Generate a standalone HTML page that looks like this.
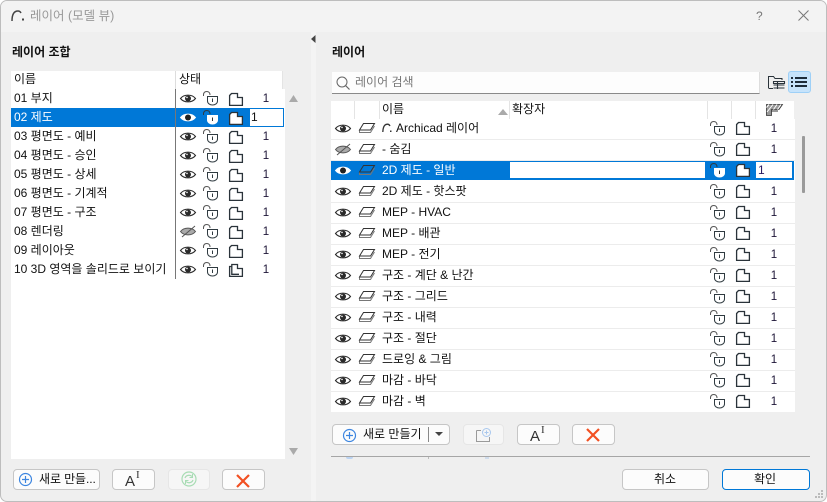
<!DOCTYPE html>
<html lang="ko"><head><meta charset="utf-8"><title>레이어 (모델 뷰)</title>
<style>
html,body{margin:0;padding:0;width:827px;height:502px;overflow:hidden;background:#fff}
*{box-sizing:border-box}
#w{position:absolute;left:0;top:0;width:827px;height:502px;background:#efefef;border:1px solid #bdbdbd;border-radius:7px;overflow:hidden;font:12px/14px "Liberation Sans","Noto Sans CJK KR",sans-serif;color:#111}
#w>*{position:absolute;margin-left:-1px}
.t{white-space:nowrap;height:14px;line-height:14px;margin-top:1px}
.r{margin-top:0}
.n{font-size:11.5px;color:#1c1436;width:12px;text-align:center;height:14px;line-height:14px;margin-top:1px}
.s{color:#fff}
svg{overflow:visible}
.b{background:#fcfcfc;border:1px solid #c6c6c6;border-radius:4px;height:21px}
.d{background:#f6f6f6;border-color:#e6e6e6}
.sep{height:1px;left:331px;width:464px;background:#ececec}
</style></head><body>
<svg width="0" height="0" style="position:absolute"><defs>
<g id="eye" fill="none" stroke="#2a2a2a"><path d="M.5 5.500C4 1 12 1 15.500 5.500C12 10 4 10 .5 5.500Z" stroke-width="1.100"/><circle cx="8" cy="5.500" r="3" fill="#2a2a2a" stroke="none"/><circle cx="7" cy="4.400" r=".8" fill="#fff" stroke="none"/></g>
<g id="eyew" fill="none" stroke="#fff"><path d="M.5 5.500C4 1 12 1 15.500 5.500C12 10 4 10 .5 5.500Z" fill="#fff"/><circle cx="8" cy="5.500" r="3" fill="#222" stroke="none"/></g>
<g id="eyex" fill="#aaa" stroke="#555"><path d="M.5 5.500C4 1 12 1 15.500 5.500C12 10 4 10 .5 5.500Z"/><path d="M2 11L15 0" fill="none"/></g>
<g id="lock" fill="none" stroke="#2f3a40"><path d="M.5 5V4C.5 1.500 2 .5 3.800 .5S7 1.700 7 4" stroke="#555"/><path d="M4.500 5.500H14.500V10C14.500 12.500 12 14 9.500 14S4.500 12.500 4.500 10Z" fill="#fff"/><path d="M9.500 7.500V11"/></g>
<g id="lockw" fill="none"><path d="M.5 5V4C.5 1.500 2 .5 3.800 .5S7 1.700 7 4" stroke="#2f3a40"/><path d="M4.500 5.500H14.500V10C14.500 12.500 12 14 9.500 14S4.500 12.500 4.500 10Z" fill="#fff" stroke="#fff"/><path d="M9.500 7.500V11" stroke="#333"/></g>
<g id="sheet" fill="#fff" stroke="#2a333a" stroke-width="1.300"><path d="M.6 3.500L2.500 1.500H8.500V5.500H13.400V13.400H.6Z"/></g>
<g id="sheet2" fill="#fff" stroke="#2a333a" stroke-width="1.300"><path d="M.6 3.500H2.800V1.500H8.500V5.500H13.400V13.400H.6ZM2.800 3.500V11.300H10"/></g>
<g id="pl" fill="none"><path d="M.5 7V9.500H11.500L15.500 3" stroke="#777"/><path d="M4.500 .5H15.500L11.500 7H.5Z" stroke="#333"/></g>
<g id="plus"><circle cx="6.500" cy="6.500" r="6" fill="none" stroke="#3d86e0" stroke-width="1.200"/><path d="M6.500 3V10M3 6.500H10" stroke="#3d86e0" stroke-width="1.200"/></g>
<g id="xx"><path d="M1 1L13 13M13 1L1 13" stroke="#f25022" stroke-width="2.200" fill="none"/></g>
</defs></svg>
<div id="w">
<div style="left:0;top:0;width:828px;height:31px;background:#f3f3f3"></div>
<svg style="left:11px;top:8px" width="14" height="12"><path d="M1 12C1 4 4 2 7 2C8.500 2 9.500 3 10 4" fill="none" stroke="#444" stroke-width="1.500"/><rect x="11" y="9.500" width="2" height="2" fill="#444"/></svg>
<div class="t" style="left:30px;top:8px;font-size:12.500px;color:#999;margin-top:0">레이어 (모델 뷰)</div>
<div class="t" style="left:756px;top:8px;font-size:12px;color:#777;margin-top:0">?</div>
<svg style="left:798px;top:9px" width="11" height="11"><path d="M.5 .5L10.500 10.500M10.500 .5L.5 10.500" stroke="#777" fill="none"/></svg>
<div style="left:311px;top:31px;width:5px;height:471px;background:#f4f4f4"></div>
<svg style="left:311px;top:34px" width="5" height="9"><path d="M4.500 0V8L0 4Z" fill="#444"/></svg>

<div class="t" style="left:12px;top:44px;font-weight:bold;margin-top:0">레이어 조합</div>
<div style="left:11px;top:88px;width:274px;height:370px;background:#fff"></div>
<div style="left:11px;top:70px;width:272px;height:18px;background:#fff"></div>
<div style="left:282px;top:70px;width:1px;height:18px;background:#e4e4e4"></div>
<div style="left:175px;top:70px;width:1px;height:18px;background:#ddd"></div>
<div class="t" style="left:14px;top:70px">이름</div>
<div class="t" style="left:179px;top:70px">상태</div>
<div style="left:11px;top:107px;width:273px;height:19px;background:#0078d7"></div>
<div style="left:175px;top:88px;width:1px;height:190px;background:#777"></div>
<div style="left:249px;top:107px;width:35px;height:19px;background:#fff;border:1px solid #0078d7"></div>
<div class="t r" style="left:14px;top:90px">01 부지</div>
<div class="t r s" style="left:14px;top:109px">02 제도</div>
<div class="t r" style="left:14px;top:128px">03 평면도 - 예비</div>
<div class="t r" style="left:14px;top:147px">04 평면도 - 승인</div>
<div class="t r" style="left:14px;top:166px">05 평면도 - 상세</div>
<div class="t r" style="left:14px;top:185px">06 평면도 - 기계적</div>
<div class="t r" style="left:14px;top:204px">07 평면도 - 구조</div>
<div class="t r" style="left:14px;top:223px">08 렌더링</div>
<div class="t r" style="left:14px;top:242px">09 레이아웃</div>
<div class="t r" style="left:14px;top:261px">10 3D 영역을 솔리드로 보이기</div>

<div class="n" style="left:260px;top:90px">1</div>
<div class="t r" style="left:251px;top:109px">1</div>
<div class="n" style="left:260px;top:128px">1</div>
<div class="n" style="left:260px;top:147px">1</div>
<div class="n" style="left:260px;top:166px">1</div>
<div class="n" style="left:260px;top:185px">1</div>
<div class="n" style="left:260px;top:204px">1</div>
<div class="n" style="left:260px;top:223px">1</div>
<div class="n" style="left:260px;top:242px">1</div>
<div class="n" style="left:260px;top:261px">1</div>

<svg style="left:289px;top:94px" width="9" height="7"><path d="M4.500 0L9 7H0Z" fill="#aaa"/></svg>
<svg style="left:289px;top:447px" width="9" height="7"><path d="M0 0H9L4.500 7Z" fill="#aaa"/></svg>

<div class="b" style="left:13px;top:468px;width:87px"></div>
<svg style="left:19px;top:472px" width="13" height="13"><use href="#plus"/></svg>
<div class="t" style="left:39px;top:470px;letter-spacing:-.1px">새로 만들...</div>
<div class="b" style="left:112px;top:468px;width:43px"></div>
<div class="t" style="left:125px;top:473px;font-size:15px;color:#333">A</div>
<div class="t" style="left:136px;top:466px;font:11px/14px 'Liberation Serif',serif;color:#333">I</div>
<div class="b d" style="left:168px;top:468px;width:42px"></div>
<svg style="left:181px;top:470px" width="16" height="16"><circle cx="8" cy="8" r="7" fill="none" stroke="#a8dcb4" stroke-width="1.200"/><path d="M4 7C5 4 9 3.500 11 5.500M12 9C11 12 7 12.500 5 10.500" fill="none" stroke="#a8dcb4" stroke-width="1.200"/><path d="M11.500 3V6.500H8.500M4.500 13V9.500H7.500" fill="none" stroke="#a8dcb4"/></svg>
<div class="b" style="left:222px;top:468px;width:43px"></div>
<svg style="left:236px;top:473px" width="14" height="14"><use href="#xx"/></svg>

<div class="t" style="left:332px;top:44px;font-weight:bold;margin-top:0">레이어</div>
<div style="left:332px;top:71px;width:428px;height:22px;background:#fdfdfd;border-bottom:1px solid #8a8a8a;border-right:1px solid #ddd"></div>
<svg style="left:336px;top:75px" width="15" height="15"><circle cx="6" cy="6" r="5" fill="none" stroke="#666"/><path d="M9.500 9.500L13.500 13.500" stroke="#666" stroke-width="1.200"/></svg>
<div class="t" style="left:355px;top:73px;color:#777">레이어 검색</div>
<svg style="left:768px;top:74px" width="17" height="15" fill="none" stroke="#2a333a"><path d="M.5 13V1.500H5.500L7 3.500H14V5"/><path d="M.5 13.500H5"/><path d="M5.500 6.500H16.500V8.500H5.500ZM5.500 10H16.500M5.500 13H16.500M9.500 6.500V14" stroke-width="1.100"/></svg>
<div style="left:788px;top:70px;width:23px;height:22px;background:#c6e3fb;border:1px solid #9ed0f7;border-radius:3px"></div>
<svg style="left:791px;top:76px" width="17" height="10"><path d="M0 1H2M4 1H16M0 5H2M4 5H16M0 9H2M4 9H16" stroke="#1d2c3a" stroke-width="2"/></svg>

<div style="left:331px;top:100px;width:463px;height:18px;background:#fff"></div>
<div style="left:331px;top:118px;width:464px;height:293px;background:#fff"></div>
<div style="left:354px;top:100px;width:1px;height:18px;background:#e4e4e4"></div>
<div style="left:379px;top:100px;width:1px;height:18px;background:#e4e4e4"></div>
<div style="left:509px;top:100px;width:1px;height:18px;background:#e4e4e4"></div>
<div style="left:707px;top:100px;width:1px;height:18px;background:#e4e4e4"></div>
<div style="left:731px;top:100px;width:1px;height:18px;background:#e4e4e4"></div>
<div style="left:755px;top:100px;width:1px;height:18px;background:#e4e4e4"></div>
<div class="t r" style="left:382px;top:101px">이름</div>
<svg style="left:498px;top:108px" width="10" height="6"><path d="M5 0L10 6H0Z" fill="#aaa"/></svg>
<div class="t r" style="left:512px;top:101px">확장자</div>
<svg style="left:766px;top:103px" width="17" height="12"><path d="M.5 .5H16.500L13 5.500H5.500V11.500H.5Z" fill="#999" stroke="#333" stroke-width=".8"/><path d="M3 .5L.5 3.500M7 .5L1 8M11 .5L7.500 5.500M15 .5L11.500 5.500" stroke="#fff"/><path d="M5.500 7H12" stroke="#333"/></svg>

<div class="sep" style="top:138px"></div>
<div class="sep" style="top:159px"></div>
<div class="sep" style="top:201px"></div>
<div class="sep" style="top:222px"></div>
<div class="sep" style="top:243px"></div>
<div class="sep" style="top:264px"></div>
<div class="sep" style="top:285px"></div>
<div class="sep" style="top:306px"></div>
<div class="sep" style="top:327px"></div>
<div class="sep" style="top:348px"></div>
<div class="sep" style="top:369px"></div>
<div class="sep" style="top:390px"></div>

<div style="left:331px;top:160px;width:463px;height:19px;background:#0078d7"></div>
<div style="left:510px;top:161px;width:195px;height:16px;background:#fff"></div>
<div style="left:756px;top:161px;width:36px;height:16px;background:#fff"></div>

<svg style="left:382px;top:122px" width="11" height="10"><path d="M.8 9C1 3 3 1.200 5.500 1.200C6.800 1.200 7.500 2 8 3" fill="none" stroke="#333" stroke-width="1.300"/><rect x="8" y="7.500" width="1.500" height="1.500" fill="#333"/></svg>
<div class="t r" style="left:396px;top:120px">Archicad 레이어</div>
<div class="t r" style="left:382px;top:141px">- 숨김</div>
<div class="t r s" style="left:382px;top:162px">2D 제도 - 일반</div>
<div class="t r" style="left:382px;top:183px">2D 제도 - 핫스팟</div>
<div class="t r" style="left:382px;top:204px">MEP - HVAC</div>
<div class="t r" style="left:382px;top:225px">MEP - 배관</div>
<div class="t r" style="left:382px;top:246px">MEP - 전기</div>
<div class="t r" style="left:382px;top:267px">구조 - 계단 &amp; 난간</div>
<div class="t r" style="left:382px;top:288px">구조 - 그리드</div>
<div class="t r" style="left:382px;top:309px">구조 - 내력</div>
<div class="t r" style="left:382px;top:330px">구조 - 절단</div>
<div class="t r" style="left:382px;top:351px">드로잉 &amp; 그림</div>
<div class="t r" style="left:382px;top:372px">마감 - 바닥</div>
<div class="t r" style="left:382px;top:393px">마감 - 벽</div>

<div class="n" style="left:768px;top:120px">1</div>
<div class="n" style="left:768px;top:141px">1</div>
<div class="t r" style="left:758px;top:162px;color:#2a1a60">1</div>
<div class="n" style="left:768px;top:183px">1</div>
<div class="n" style="left:768px;top:204px">1</div>
<div class="n" style="left:768px;top:225px">1</div>
<div class="n" style="left:768px;top:246px">1</div>
<div class="n" style="left:768px;top:267px">1</div>
<div class="n" style="left:768px;top:288px">1</div>
<div class="n" style="left:768px;top:309px">1</div>
<div class="n" style="left:768px;top:330px">1</div>
<div class="n" style="left:768px;top:351px">1</div>
<div class="n" style="left:768px;top:372px">1</div>
<div class="n" style="left:768px;top:393px">1</div>

<svg style="left:0;top:0" width="827" height="502">
<g transform="translate(180,0)"><use href="#eye" y="92"/><use href="#eyew" y="111"/><use href="#eye" y="130"/><use href="#eye" y="149"/><use href="#eye" y="168"/><use href="#eye" y="187"/><use href="#eye" y="206"/><use href="#eyex" y="225"/><use href="#eye" y="244"/><use href="#eye" y="263"/></g>
<g transform="translate(203,0)"><use href="#lock" y="90"/><use href="#lockw" y="109"/><use href="#lock" y="128"/><use href="#lock" y="147"/><use href="#lock" y="166"/><use href="#lock" y="185"/><use href="#lock" y="204"/><use href="#lock" y="223"/><use href="#lock" y="242"/><use href="#lock" y="261"/></g>
<g transform="translate(229,0)"><use href="#sheet" y="91"/><use href="#sheet" y="110"/><use href="#sheet" y="129"/><use href="#sheet" y="148"/><use href="#sheet" y="167"/><use href="#sheet" y="186"/><use href="#sheet" y="205"/><use href="#sheet" y="224"/><use href="#sheet" y="243"/><use href="#sheet2" y="262"/></g>
<g transform="translate(335,0)"><use href="#eye" y="122"/><use href="#eyex" y="143"/><use href="#eyew" y="164"/><use href="#eye" y="185"/><use href="#eye" y="206"/><use href="#eye" y="227"/><use href="#eye" y="248"/><use href="#eye" y="269"/><use href="#eye" y="290"/><use href="#eye" y="311"/><use href="#eye" y="332"/><use href="#eye" y="353"/><use href="#eye" y="374"/><use href="#eye" y="395"/></g>
<g transform="translate(359,0)"><use href="#pl" y="122"/><use href="#pl" y="143"/><use href="#pl" y="164"/><use href="#pl" y="185"/><use href="#pl" y="206"/><use href="#pl" y="227"/><use href="#pl" y="248"/><use href="#pl" y="269"/><use href="#pl" y="290"/><use href="#pl" y="311"/><use href="#pl" y="332"/><use href="#pl" y="353"/><use href="#pl" y="374"/><use href="#pl" y="395"/></g>
<g transform="translate(710,0)"><use href="#lock" y="120"/><use href="#lock" y="141"/><use href="#lockw" y="162"/><use href="#lock" y="183"/><use href="#lock" y="204"/><use href="#lock" y="225"/><use href="#lock" y="246"/><use href="#lock" y="267"/><use href="#lock" y="288"/><use href="#lock" y="309"/><use href="#lock" y="330"/><use href="#lock" y="351"/><use href="#lock" y="372"/><use href="#lock" y="393"/></g>
<g transform="translate(736,0)"><use href="#sheet" y="120"/><use href="#sheet" y="141"/><use href="#sheet" y="162"/><use href="#sheet" y="183"/><use href="#sheet" y="204"/><use href="#sheet" y="225"/><use href="#sheet" y="246"/><use href="#sheet" y="267"/><use href="#sheet" y="288"/><use href="#sheet" y="309"/><use href="#sheet" y="330"/><use href="#sheet" y="351"/><use href="#sheet" y="372"/><use href="#sheet" y="393"/></g>
</svg>

<div style="left:802px;top:135px;width:3px;height:57px;background:#9a9a9a;border-radius:1px"></div>

<div class="b" style="left:332px;top:423px;width:118px"></div>
<svg style="left:343px;top:428px" width="13" height="13"><use href="#plus"/></svg>
<div class="t" style="left:363px;top:425px">새로 만들기</div>
<div style="left:428px;top:426px;width:1px;height:15px;background:#888"></div>
<svg style="left:435px;top:431px" width="8" height="4"><path d="M0 0H8L4 4Z" fill="#444"/></svg>
<div class="b d" style="left:463px;top:423px;width:41px"></div>
<svg style="left:476px;top:427px" width="16" height="14" fill="none" stroke="#9a9a9a"><path d="M.5 2.500H5M.5 2.500V13.500H13.500V9"/><circle cx="10.500" cy="4.500" r="4" stroke="#a9c8ee" fill="#f6f6f6"/><path d="M10.500 2.500V6.500M8.500 4.500H12.500" stroke="#a9c8ee"/></svg>
<div class="b" style="left:517px;top:423px;width:43px"></div>
<div class="t" style="left:530px;top:428px;font-size:15px;color:#333">A</div>
<div class="t" style="left:541px;top:421px;font:11px/14px 'Liberation Serif',serif;color:#333">I</div>
<div class="b" style="left:572px;top:423px;width:43px"></div>
<svg style="left:586px;top:427px" width="14" height="14"><use href="#xx"/></svg>

<div style="left:331px;top:455px;width:479px;height:1px;background:#a6a6a6"></div>
<div style="left:346px;top:456px;width:7px;height:2px;background:#bcd4f2;border-radius:0 0 5px 5px"></div>
<div style="left:428px;top:456px;width:1px;height:2px;background:#bbb"></div>
<div style="left:485px;top:456px;width:4px;height:2px;background:#cfdcec"></div>

<div class="b" style="left:622px;top:468px;width:87px"></div>
<div class="t" style="left:654px;top:470px">취소</div>
<div class="b" style="left:722px;top:468px;width:88px;border-color:#0078d7"></div>
<div class="t" style="left:754px;top:470px">확인</div>
<svg style="left:815px;top:489px" width="9" height="9"><path d="M6 0h2v2H6zM3 3h2v2H3zM6 3h2v2H6zM0 6h2v2H0zM3 6h2v2H3zM6 6h2v2H6z" fill="#bbb"/></svg>
</div>
</body></html>
